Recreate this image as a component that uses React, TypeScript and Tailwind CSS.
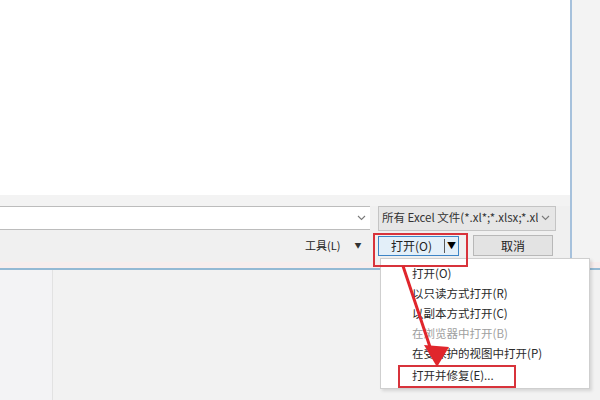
import { ReactNode } from "react";

const FONT = { fontFamily: '"Noto Sans CJK SC", "Noto Sans", "Liberation Sans", sans-serif' };

function Chevron() {
  return (
    <svg width="9" height="6" viewBox="0 0 9 6" className="shrink-0">
      <path d="M1 1 L4.5 4.5 L8 1" fill="none" stroke="#7a7a7a" strokeWidth="1.1" />
    </svg>
  );
}

function MenuItem({ children, muted }: { children: ReactNode; muted?: boolean }) {
  return (
    <div className={`flex h-[20px] items-center pl-[31px] ${muted ? "text-[#a0a0a0]" : "text-[#2a2a2a]"}`}>
      {children}
    </div>
  );
}

export default function App() {
  return (
    <div className="relative h-[400px] w-[600px] overflow-hidden bg-[#f0f0f0] text-[12px]" style={FONT}>
      {/* dialog body */}
      <div className="flex h-[262px]">
        <div className="flex w-[570px] flex-col">
          <div className="h-[195px] bg-white" />
          <div className="h-[11px] bg-[#f3f3f3]" />
          <div className="flex h-[24px] items-center">
            <div className="flex h-full w-[370px] items-center justify-end border-y border-[#bcbcbc] bg-white pr-[4px]">
              <Chevron />
            </div>
            <div className="ml-[8px] flex h-[25px] w-[178px] items-center gap-[3px] overflow-hidden border border-[#c4c4c4] bg-[#e6e6e6] pl-[3px] pr-[5px] text-[11.5px] text-[#333]">
              <span className="flex-1 overflow-hidden whitespace-nowrap">所有 Excel 文件(*.xl*;*.xlsx;*.xl</span>
              <Chevron />
            </div>
          </div>
          <div className="mt-[5px] flex h-[21px] items-center">
            <span className="ml-[305px] w-[45px] text-[11px] text-[#222]">工具(L)</span>
            <span className="w-[16px] text-center text-[7px] text-[#333]">▼</span>
            <div className="ml-[12px] flex h-[20px] w-[81px] items-stretch border border-[#3d84c6] bg-[#e3eff9]">
              <div className="flex flex-1 items-center justify-center text-[#222]">打开(O)</div>
              <div className="my-[2px] w-px bg-[#5a5a5a]" />
              <div className="flex w-[13px] items-center justify-center text-[9px] text-black">▼</div>
            </div>
            <div className="ml-[14px] flex h-[21px] w-[80px] items-center justify-center border border-[#b8b8b8] bg-[#e3e3e3] text-[#222]">
              取消
            </div>
          </div>
        </div>
        <div className="h-[260px] w-[2px] bg-[#a6c1dc]" />
        <div className="flex-1 bg-[#f3f3f3]" />
      </div>
      <div className="h-[6px] bg-[#f7eded]" />
      <div className="h-[2px] bg-[#94b9d4]" />
      <div className="flex h-[130px]">
        <div className="w-[52px] bg-[#f3f3f5]" />
        <div className="w-px bg-[#e2e2e2]" />
        <div className="flex-1 bg-[#f2f2f2]" />
      </div>

      {/* dropdown menu */}
      <div className="absolute left-[380px] top-[258px] flex h-[131px] w-[210px] flex-col border border-[#cfcfcf] bg-white pt-[5px] text-[11.5px] shadow-[2px_2px_3px_rgba(0,0,0,0.12)]">
        <MenuItem>打开(O)</MenuItem>
        <MenuItem>以只读方式打开(R)</MenuItem>
        <MenuItem>以副本方式打开(C)</MenuItem>
        <MenuItem muted>在浏览器中打开(B)</MenuItem>
        <MenuItem>在受保护的视图中打开(P)</MenuItem>
        <div className="mt-[2px]">
          <MenuItem>打开并修复(E)...</MenuItem>
        </div>
      </div>

      {/* red annotations */}
      <div className="absolute left-[373px] top-[233px] h-[34px] w-[95px] border-2 border-[#d8333b]" />
      <div className="absolute left-[398px] top-[365px] h-[23px] w-[118px] border-2 border-[#d8333b]" />
      <svg className="pointer-events-none absolute left-0 top-0" width="600" height="400" viewBox="0 0 600 400">
        <line x1="403" y1="266" x2="431" y2="350" stroke="#e0262c" strokeWidth="3" />
        <polygon points="437,367 424,345 449,347" fill="#e0262c" />
      </svg>
    </div>
  );
}
